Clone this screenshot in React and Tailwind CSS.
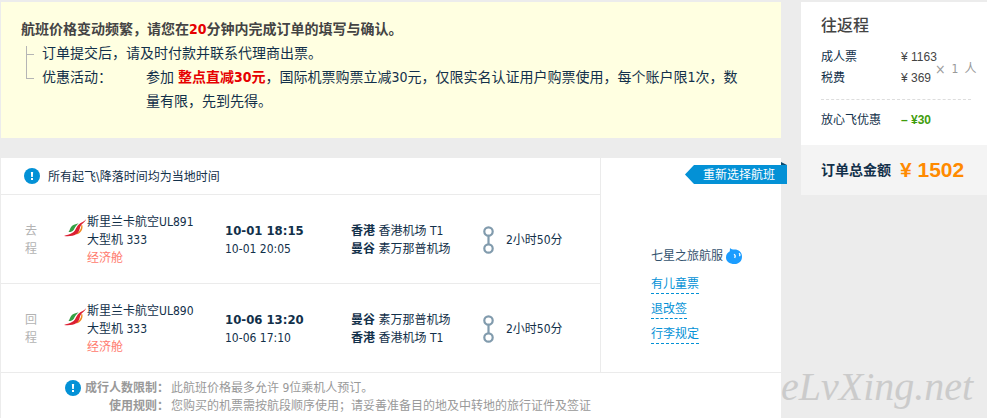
const flights = [
  {
    way: ['去', '程'],
    airline: '斯里兰卡航空UL891',
    plane: '大型机 333',
    cabin: '经济舱',
    depart: '10-01 18:15',
    arrive: '10-01 20:05',
    from: ['香港', '香港机场 T1'],
    to: ['曼谷', '素万那普机场'],
    duration: '2小时50分',
  },
  {
    way: ['回', '程'],
    airline: '斯里兰卡航空UL890',
    plane: '大型机 333',
    cabin: '经济舱',
    depart: '10-06 13:20',
    arrive: '10-06 17:10',
    from: ['曼谷', '素万那普机场'],
    to: ['香港', '香港机场 T1'],
    duration: '2小时50分',
  },
]

const rules = ['有儿童票', '退改签', '行李规定']

function NoticeIcon() {
  return (
    <svg viewBox="0 0 16 16" className="size-4 shrink-0" aria-hidden="true">
      <circle cx="8" cy="8" r="8" fill="#0391d6" />
      <path d="M6.9 4h2.2l-.3 5H7.2z" fill="#fff" />
      <rect x="7" y="10" width="2" height="2" fill="#fff" />
    </svg>
  )
}

function AirlineLogo() {
  return (
    <svg viewBox="0 0 22 18" className="h-[18px] w-[22px]" aria-hidden="true">
      <path d="M4.500 13C6 11 6 8.500 8.500 6.500 10.500 5 12.500 5 14.500 4.200 12 6.500 11 8.500 10 10.500 8.500 12.500 6.500 13.200 4.500 13z" fill="#35a044" />
      <path d="M12.500 15.500C16 14.500 19 11.500 18.500 6.500L17.200 6C17.500 10 15.500 12.500 12 14.500z" fill="#f08a24" />
      <path d="M22 .3C20.500 2.500 17 3.500 14.800 5.500 11.800 8.200 11.500 12 8 14 5.500 15.500 2.500 16 0 17 4 17.600 9.500 17.300 12.800 14.800 16.500 11.800 15 8.500 17.600 5.500 19.500 3.700 21.500 2.800 22 .3z" fill="#dc2032" />
      <path d="M9 13.200C11 11.500 11 9 12.800 7" stroke="#fff" strokeWidth=".7" fill="none" />
    </svg>
  )
}

function RouteIcon() {
  return (
    <svg viewBox="0 0 11 28" className="h-7 w-[11px]" fill="#fff" stroke="#819bad" strokeWidth="2.200" aria-hidden="true">
      <path d="M5.500 9v10" />
      <circle cx="5.500" cy="5.500" r="4.200" />
      <circle cx="5.500" cy="22.500" r="4.200" />
    </svg>
  )
}

function ChatIcon() {
  return (
    <svg viewBox="0 0 16 16" className="size-4" aria-hidden="true">
      <path d="M4 0c1 1.200 2.500 1.500 4.500 1.500C13 1.500 16 4.500 16 8.700 16 13 13 16 8.500 16 3.500 16 0 13.500 0 9.500 0 6.500 1.500 4.500 3.800 3.200z" fill="#1c9dff" />
      <path d="M8 6.200q2 1.300.6 3.600M13 5.200q1.600 1.200.4 3" stroke="#fff" strokeWidth="1.300" fill="none" />
    </svg>
  )
}

function FlightRow({ flight }) {
  return (
    <li className="grid grid-cols-[39px_23px_138px_126px_132px_23px_1fr] items-center border-b border-[#ebebeb] pt-[18px] pb-4 pl-6">
      <div className="text-[#b3b3b3]">
        {flight.way.map((c) => (
          <p key={c}>{c}</p>
        ))}
      </div>
      <div className="self-start pt-[6px]">
        <AirlineLogo />
      </div>
      <div>
        <p>{flight.airline}</p>
        <p>{flight.plane}</p>
        <p className="text-[#ff7a6e]">{flight.cabin}</p>
      </div>
      <div>
        <p className="text-[13px] font-bold">{flight.depart}</p>
        <p>{flight.arrive}</p>
      </div>
      <div>
        <p><b>{flight.from[0]}</b> {flight.from[1]}</p>
        <p><b>{flight.to[0]}</b> {flight.to[1]}</p>
      </div>
      <RouteIcon />
      <p>{flight.duration}</p>
    </li>
  )
}

function OrderNotice() {
  return (
    <section className="bg-[#ffffe1] px-5 pt-[15px] pb-[25px] text-sm leading-6">
      <h1 className="font-bold text-[#444]">
        航班价格变动频繁，请您在<span className="text-[#e60000]">20</span>分钟内完成订单的填写与确认。
      </h1>
      <div className="flex gap-2 pl-[5px]">
        <div className="w-2 shrink-0 pt-[5px]">
          <div className="h-[9px] border-b border-l border-[#b5b5b5]" />
          <div className="h-6 border-b border-l border-[#b5b5b5]" />
        </div>
        <div className="flex-1">
          <p>订单提交后，请及时付款并联系代理商出票。</p>
          <dl className="flex">
            <dt className="w-[104px] shrink-0">优惠活动：</dt>
            <dd className="max-w-[604px]">
              参加 <strong className="text-[#e60000]">整点直减30元</strong>，国际机票购票立减30元，仅限实名认证用户购票使用，每个账户限1次，数量有限，先到先得。
            </dd>
          </dl>
        </div>
      </div>
    </section>
  )
}

function FlightCard() {
  return (
    <section className="mt-5 bg-white">
      <div className="flex">
        <div className="flex-1">
          <div className="flex h-[37px] items-center gap-2 border-b border-[#ebebeb] pl-[23px]">
            <NoticeIcon />
            <h2 className="pt-0.5">所有起飞\降落时间均为当地时间</h2>
          </div>
          <ul>
            {flights.map((flight) => (
              <FlightRow key={flight.depart} flight={flight} />
            ))}
          </ul>
        </div>
        <div className="relative w-[181px] shrink-0 border-b border-l border-[#ebebeb] pt-[89px] pl-[50px]">
          <button
            type="button"
            className="absolute top-[7px] right-[-6px] h-[19px] bg-[#0391d6] pr-3 pl-[18px] text-white [clip-path:polygon(9px_0,100%_0,100%_100%,9px_100%,0_50%)]"
          >
            重新选择航班
          </button>
          <span className="absolute top-1 right-[-6px] h-[3px] w-1.5 bg-[#0b4a6e] [clip-path:polygon(0_0,100%_100%,0_100%)]" />
          <p className="flex items-center gap-[3px] text-[#34536e]">
            七星之旅航服 <ChatIcon />
          </p>
          <ul className="mt-[10px] flex flex-col items-start gap-[6px]">
            {rules.map((rule) => (
              <li key={rule} className="flex">
                <a href="#" className="border-b border-dashed border-[#0391d6] text-[#0391d6]">
                  {rule}
                </a>
              </li>
            ))}
          </ul>
        </div>
      </div>
      <dl className="grid grid-cols-[16px_auto_1fr] gap-x-0.5 pt-[6px] pb-3 pl-16 text-[#999]">
        <dt className="col-span-2 flex items-center gap-1 font-bold">
          <NoticeIcon />
          成行人数限制：
        </dt>
        <dd>此航班价格最多允许 9位乘机人预订。</dd>
        <dt className="col-span-2 text-right font-bold">使用规则：</dt>
        <dd>您购买的机票需按航段顺序使用；请妥善准备目的地及中转地的旅行证件及签证</dd>
      </dl>
    </section>
  )
}

function PriceSummary() {
  return (
    <aside className="w-[186px] shrink-0 bg-white">
      <div className="px-5 pt-3 pb-4">
        <h2 className="text-base leading-6 font-medium text-[#444]">往返程</h2>
        <div className="mt-[10px] flex items-center">
          <dl className="grid grid-cols-[80px_34px] gap-y-[3px] whitespace-nowrap">
            <dt>成人票</dt>
            <dd className="font-['Liberation_Sans'] text-[#444]">¥ 1163</dd>
            <dt>税费</dt>
            <dd className="font-['Liberation_Sans'] text-[#444]">¥ 369</dd>
          </dl>
          <p className="flex shrink-0 items-center gap-[6px] pt-0.5 text-[#999]">
            <span className="text-sm leading-[18px]">×</span>
            <span>1</span>
            <span>人</span>
          </p>
        </div>
        <dl className="mt-3 mr-[-4px] grid grid-cols-[80px_1fr] border-t border-dashed border-[#ddd] pt-[11px]">
          <dt>放心飞优惠</dt>
          <dd className="font-['Liberation_Sans'] font-bold text-[#3f9d0c]">– ¥30</dd>
        </dl>
      </div>
      <dl className="grid h-[50px] grid-cols-[79px_1fr] items-center bg-[#f4f4f4] pl-5 whitespace-nowrap">
        <dt className="text-sm font-bold">订单总金额</dt>
        <dd className="font-['Liberation_Sans'] text-[21px] font-bold text-[#ff8a00]">¥ 1502</dd>
      </dl>
    </aside>
  )
}

export default function App() {
  return (
    <div className="flex min-h-screen items-start gap-5 bg-[#ececec] pt-0.5 pl-px font-['DejaVu_Sans_Condensed','Noto_Sans_CJK_SC',sans-serif] text-xs leading-[18px] text-[#12304a]">
      <main className="min-w-0 flex-1">
        <OrderNotice />
        <FlightCard />
      </main>
      <div className="flex w-[186px] shrink-0 flex-col self-stretch">
        <PriceSummary />
        <p className="mt-auto mb-4 ml-[-20px] font-['Liberation_Serif',serif] text-[40px] leading-[48px] whitespace-nowrap text-[#cbcbcb] italic">
          eLvXing.net
        </p>
      </div>
    </div>
  )
}
